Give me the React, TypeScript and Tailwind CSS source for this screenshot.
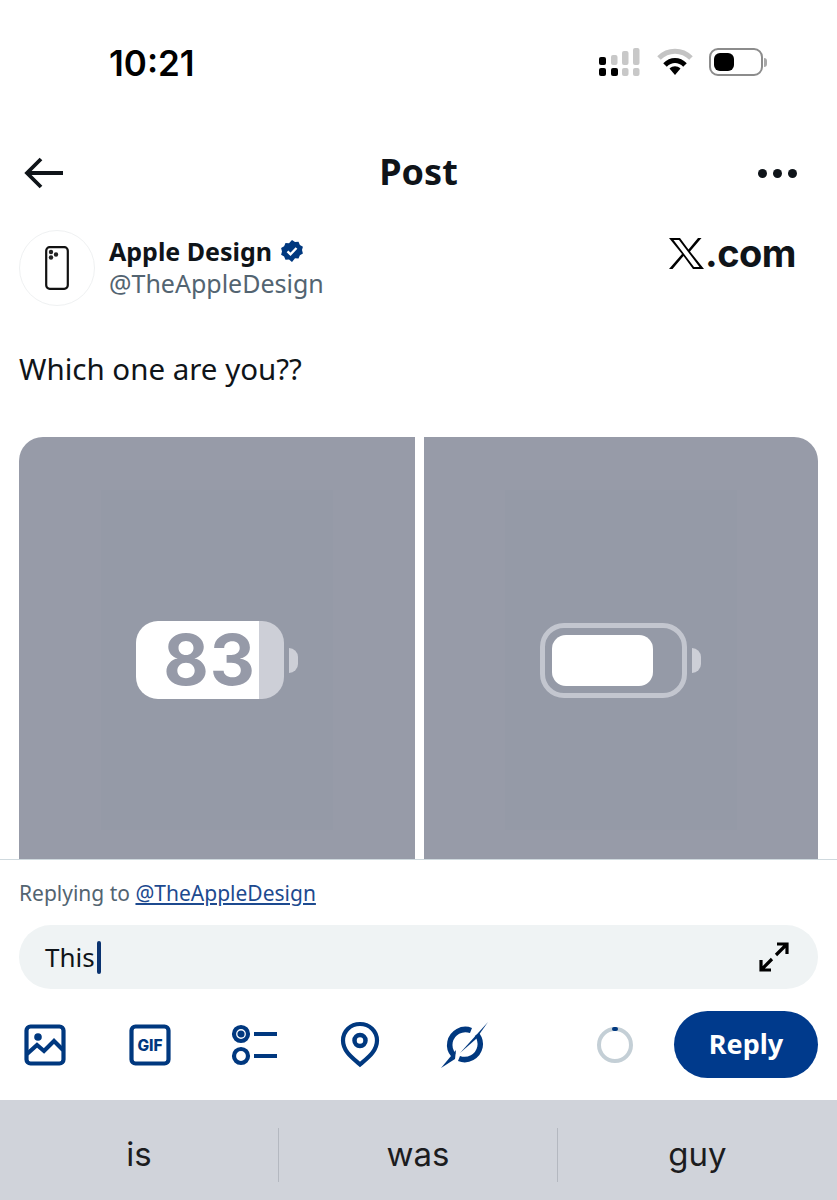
const navy = "#00387f";

function StatusIcons() {
  return (
    <div className="flex items-center gap-[16px]">
      <svg width="42" height="30" viewBox="0 0 42 30">
        <rect x="0" y="10" width="7" height="8" rx="2" fill="#000" />
        <rect x="0" y="21" width="7" height="8" rx="2" fill="#000" />
        <rect x="12" y="8" width="6.500" height="10" rx="2" fill="#c8c8c8" />
        <rect x="12" y="21" width="7" height="8" rx="2" fill="#000" />
        <rect x="23" y="4" width="6.500" height="14" rx="2" fill="#c8c8c8" />
        <rect x="23" y="21" width="6.500" height="8" rx="2" fill="#c8c8c8" />
        <rect x="34" y="1" width="6.500" height="17" rx="2" fill="#c8c8c8" />
        <rect x="34" y="21" width="6.500" height="8" rx="2" fill="#c8c8c8" />
      </svg>
      <svg width="36" height="28" viewBox="0 0 36 28">
        <path d="M2 10 C11 1 25 1 34 10" fill="none" stroke="#c4c4c4" strokeWidth="5" />
        <path d="M8 17 C14 11 22 11 28 17" fill="none" stroke="#000" strokeWidth="5" />
        <path d="M12.500 20.500 C16 17.500 20 17.500 23.500 20.500 L18 27 Z" fill="#000" />
      </svg>
      <div className="flex items-center">
        <div className="w-[54px] h-[28px] rounded-[9px] border-[2px] border-[#8c8c8c] p-[3px]">
          <div className="w-[20px] h-[18px] rounded-[6px] bg-black" />
        </div>
        <div className="ml-[1px] w-[3px] h-[9px] rounded-r-full bg-[#a8a8a8]" />
      </div>
    </div>
  );
}

function PhoneAvatar() {
  return (
    <div className="w-[76px] h-[76px] rounded-full border border-[#eff1f2] flex items-center justify-center shrink-0">
      <svg width="24" height="44" viewBox="0 0 24 44" fill="none">
        <rect x="1.200" y="1.200" width="21.600" height="41.600" rx="3.500" stroke="#111" strokeWidth="2.200" />
        <circle cx="6" cy="6" r="2.200" fill="#222" />
        <circle cx="11" cy="8.500" r="2.200" fill="#222" />
        <circle cx="6" cy="11.500" r="2.200" fill="#222" />
      </svg>
    </div>
  );
}

function VerifiedBadge() {
  return (
    <svg width="24" height="24" viewBox="0 0 24 24">
      <path
        d="M12 1l3 1.900 3.500-.2 1.400 3.200 3 1.800-.9 3.400.9 3.400-3 1.800-1.400 3.200-3.500-.2L12 23l-3-2.400-3.500.2-1.400-3.200-3-1.800.9-3.400-.9-3.400 3-1.800 1.400-3.200 3.500.2z"
        fill={navy}
      />
      <path d="M7.500 12.300l3 3 6-6.300" fill="none" stroke="#fff" strokeWidth="2.400" />
    </svg>
  );
}

function Battery83() {
  return (
    <div className="flex items-center">
      <div className="w-[123px] h-[78px] rounded-l-[22px] bg-white flex items-center justify-end pr-[3px]">
        <span className="text-[70px] leading-none font-bold text-[#969aa8] font-['Inter',sans-serif] tracking-[1px]">83</span>
      </div>
      <div className="w-[25px] h-[78px] rounded-r-[22px] bg-[#cdcfd7]" />
      <div className="ml-[5px] w-[9px] h-[25px] rounded-r-full bg-[#cdcfd7]" />
    </div>
  );
}

function BatteryOutline() {
  return (
    <div className="flex items-center mr-[2px]">
      <div className="w-[147px] h-[75px] rounded-[24px] border-[5px] border-[#c3c6cf] pl-[7px] flex items-center">
        <div className="w-[101px] h-[51px] rounded-[14px] bg-white" />
      </div>
      <div className="ml-[5px] w-[9px] h-[25px] rounded-r-full bg-[#cdcfd7]" />
    </div>
  );
}

function Tile({ className, children }: { className: string; children: React.ReactNode }) {
  return (
    <div className={`bg-[#979ba8] flex justify-center ${className}`}>
      <div className="w-[232px] h-[340px] mt-[53px] bg-[#959aa7] flex items-center justify-center">
        {children}
      </div>
    </div>
  );
}

function ToolbarIcons() {
  return (
    <div className="flex items-center gap-[57px]">
      <svg width="48" height="48" viewBox="0 0 48 48" fill="none" stroke={navy} strokeWidth="4.200">
        <rect x="5.500" y="5.500" width="37" height="37" rx="4" />
        <circle cx="17" cy="16" r="3.800" fill={navy} stroke="none" />
        <path d="M6 33l10-9 7 6 10-10 9 9" />
      </svg>
      <svg width="48" height="48" viewBox="0 0 48 48" fill="none">
        <rect x="5.500" y="5.500" width="37" height="37" rx="4" stroke={navy} strokeWidth="4.200" />
        <text x="24" y="30" textAnchor="middle" fontFamily="Inter, sans-serif" fontWeight="800" fontSize="15.500" fill={navy}>GIF</text>
      </svg>
      <svg width="48" height="48" viewBox="0 0 48 48" fill="none" stroke={navy} strokeWidth="4.200">
        <circle cx="10" cy="13" r="7" />
        <circle cx="10" cy="13" r="1.500" fill={navy} />
        <circle cx="10" cy="35" r="7" />
        <path d="M23 13h23M23 35h23" />
      </svg>
      <svg width="48" height="48" viewBox="0 0 48 48" fill="none" stroke={navy} strokeWidth="4.200">
        <path d="M24 43.500C18 38 7 31 7 19.500 7 10 14.500 3 24 3s17 7 17 16.500C41 31 30 38 24 43.500z" />
        <circle cx="24" cy="19.500" r="5.500" strokeWidth="4.500" />
      </svg>
      <svg width="48" height="48" viewBox="0 0 48 48" fill="none">
        <path d="M30 9.500C21 6 11 11.500 9 21c-1 5 .5 9.500 3.500 13" stroke={navy} strokeWidth="5.500" />
        <path d="M18 37.500c9 3.500 19-2 21-11.500 1-5-.5-9-3-12.500" stroke={navy} strokeWidth="5.500" />
        <path d="M47 1L35 18 19 32z" fill={navy} />
        <path d="M0 47L15 29l-1 9z" fill={navy} />
      </svg>
    </div>
  );
}

export default function App() {
  return (
    <div className="w-[837px] h-[1200px] bg-white flex flex-col overflow-hidden font-['Noto_Sans',sans-serif] text-[#0f1419]">
      <div className="h-[127px] shrink-0 flex items-start justify-between pl-[109px] pr-[70px] pt-[40px]">
        <span className="text-[35px] leading-[46px] font-semibold font-['Inter',sans-serif] text-black">10:21</span>
        <div className="pt-[7px]">
          <StatusIcons />
        </div>
      </div>

      <div className="h-[92px] shrink-0 flex items-center justify-between pl-[24px] pr-[40px]">
        <div className="w-[56px]">
          <svg width="40" height="32" viewBox="0 0 40 32" fill="none" stroke="#0f1419" strokeWidth="3.800">
            <path d="M17 2L3 16l14 14M3 16h36" />
          </svg>
        </div>
        <span className="text-[36px] font-bold leading-[46px] mb-[2px]">Post</span>
        <div className="flex gap-[6px] w-[40px] justify-end">
          <span className="w-[9px] h-[9px] rounded-full bg-[#0f1419]" />
          <span className="w-[9px] h-[9px] rounded-full bg-[#0f1419]" />
          <span className="w-[9px] h-[9px] rounded-full bg-[#0f1419]" />
        </div>
      </div>

      <div className="h-[87px] shrink-0 flex items-start pl-[19px] pr-[41px] pt-[11px]">
        <PhoneAvatar />
        <div className="ml-[14px]">
          <div className="flex items-center gap-[8px] h-[34px] mt-[4px]">
            <span className="text-[25px] font-bold leading-[34px]">Apple Design</span>
            <VerifiedBadge />
          </div>
          <div className="text-[25px] leading-[34px] text-[#536471] mt-[-2px]">@TheAppleDesign</div>
        </div>
        <div className="ml-auto flex items-center pt-[4px]">
          <svg width="35" height="31" viewBox="0 0 35 31" fill="#000">
            <path fillRule="evenodd" d="M0 0h11l8.500 11.500L29 0h3.500L21 13.500 35 31H24l-9.500-13L3.500 31H0l13-15zM4.500 2l20.500 27h5.500L10 2z" />
          </svg>
          <span className="text-[38px] font-bold leading-none tracking-[-0.5px] ml-[1px] text-[#0f1419] font-['Inter',sans-serif]">.com</span>
        </div>
      </div>

      <div className="h-[131px] shrink-0 pl-[19px] pt-[43px] text-[29.5px] leading-[40px]">Which one are you??</div>

      <div className="flex-1 min-h-0 flex gap-[9px] px-[19px] overflow-hidden">
        <Tile className="w-[396px] rounded-tl-[24px]">
          <Battery83 />
        </Tile>
        <Tile className="flex-1 rounded-tr-[24px]">
          <BatteryOutline />
        </Tile>
      </div>

      <div className="h-[241px] shrink-0 border-t border-[#cfd9de] bg-white px-[19px]">
        <div className="pt-[19px] text-[21px] leading-[28px] text-[#536471]">
          Replying to <span className="text-[#1d4a8f] underline">@TheAppleDesign</span>
        </div>
        <div className="mt-[18px] h-[64px] rounded-full bg-[#eff3f4] flex items-center pl-[26px] pr-[28px]">
          <span className="text-[26px]">This</span>
          <span className="ml-[2px] w-[4px] h-[33px] rounded-full bg-[#0b3370]" />
          <svg className="ml-auto" width="32" height="32" viewBox="0 0 32 32" fill="none" stroke="#000" strokeWidth="3.200">
            <path d="M19 3h10v10M29 3L18 14M3 19v10h10M3 29l11-11" />
          </svg>
        </div>
        <div className="mt-[22px] flex items-center">
          <div className="ml-[2px]">
            <ToolbarIcons />
          </div>
          <div className="ml-auto mr-[41px] w-[36px] h-[36px] rounded-full border-[4px] border-[#c4cfd6] relative">
            <span className="absolute top-[-4px] left-[11px] w-[6px] h-[4px] rounded-full bg-[#00387f]" />
          </div>
          <button className="w-[144px] h-[67px] rounded-full bg-[#003a8c] text-white text-[27px] font-bold">Reply</button>
        </div>
      </div>

      <div className="h-[100px] shrink-0 bg-[#d0d3da] flex items-center pt-[9px] text-[33px] text-[#1c1c1e] font-['Inter',sans-serif]">
        <div className="w-[278px] text-center">is</div>
        <div className="w-[1px] h-[54px] bg-[#b4b8c0]" />
        <div className="w-[278px] text-center">was</div>
        <div className="w-[1px] h-[54px] bg-[#b4b8c0]" />
        <div className="flex-1 text-center">guy</div>
      </div>
    </div>
  );
}
